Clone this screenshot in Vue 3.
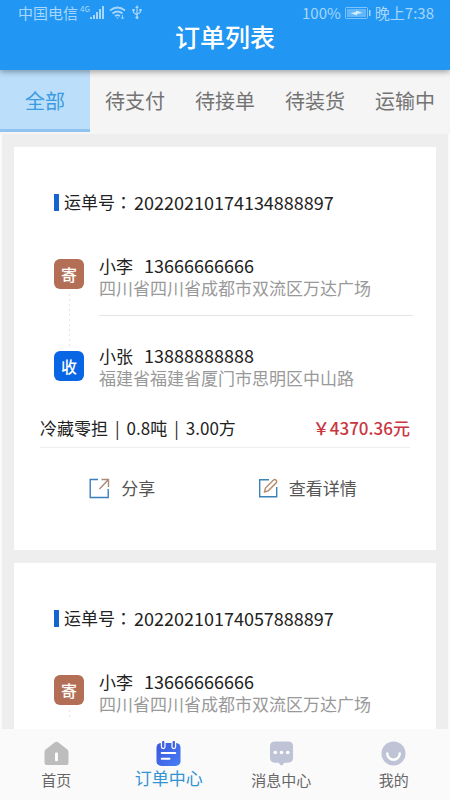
<script setup>
import { ref } from 'vue'

const tabs = ['全部', '待支付', '待接单', '待装货', '运输中']
const activeTab = ref('全部')

const sender = { name: '小李', phone: '13666666666', address: '四川省四川省成都市双流区万达广场' }
const receiver = { name: '小张', phone: '13888888888', address: '福建省福建省厦门市思明区中山路' }

const orders = [
  { no: '20220210174134888897', stops: [sender, receiver], goods: ['冷藏零担', '0.8吨', '3.00方'], price: '4370.36' },
  { no: '20220210174057888897', stops: [sender] }
]
</script>

<template>
  <div class="app">
    <header class="header">
      <div class="status">
        <div class="status-side">
          <span>中国电信</span>
          <span class="net">4G</span>
          <svg class="signal" width="15" height="14" viewBox="0 0 15 14" fill="currentColor">
            <rect x="0" y="11" width="2" height="2" /><rect x="3" y="9" width="2" height="4" />
            <rect x="6" y="6" width="2" height="7" /><rect x="9" y="3" width="2" height="10" />
            <rect x="12" y="0" width="2" height="13" />
          </svg>
          <svg class="wifi" width="17" height="14" viewBox="0 0 17 14" fill="none" stroke="currentColor" stroke-width="1.700">
            <path d="M1 4.500Q8.500-1.500 16 4.500M3.500 7.500Q8.500 3.500 13.500 7.500M6 10.200Q8.500 8.200 11 10.200" />
            <path d="M7.200 11.500h2.600l-1.300 1.500z" fill="currentColor" stroke="none" />
            <path d="M13.500 9v4M12 11.500l1.500 1.500 1.500-1.500" stroke-width="1" />
          </svg>
          <svg class="usb" width="10" height="15" viewBox="0 0 10 15" fill="none" stroke="currentColor" stroke-width="1.200">
            <path d="M5 2v10M1.500 5v2.500L5 10M8.500 5v2L5 9.500" />
            <path d="M5 0l1.800 3H3.200zM.3 4h2.400v2H.3zM7.300 4h2.400v2H7.300z" fill="currentColor" stroke="none" />
            <circle cx="5" cy="12.500" r="1.500" fill="currentColor" stroke="none" />
          </svg>
        </div>
        <div class="status-side">
          <span>100%</span>
          <svg class="battery" width="26" height="12" viewBox="0 0 26 12">
            <rect x=".5" y=".5" width="22" height="11" rx="1" fill="none" stroke="currentColor" opacity=".7" />
            <rect x="2" y="2" width="19" height="8" fill="currentColor" opacity=".5" />
            <path d="M6 6l5-1V3.500l5.500 2L17 6l-5 1v1.500l-5.500-2z" fill="#d3ecff" />
            <rect x="24" y="3" width="1.500" height="6" fill="currentColor" />
          </svg>
          <span>晚上7:38</span>
        </div>
      </div>
      <h1 class="title">订单列表</h1>
    </header>

    <nav class="tabs">
      <button
        v-for="tab in tabs"
        :key="tab"
        type="button"
        class="tab"
        :class="{ active: tab === activeTab }"
        @click="activeTab = tab"
      >{{ tab }}</button>
    </nav>

    <main class="list">
      <article v-for="order in orders" :key="order.no" class="card">
        <h2 class="waybill">
          <span class="mark"></span>
          <span>运单号<span class="colon">：</span></span>
          <span class="digits">{{ order.no }}</span>
        </h2>
        <div class="route">
          <div class="rail">
            <span class="badge from">寄</span>
            <span class="dots"></span>
            <span v-if="order.stops.length > 1" class="badge to">收</span>
          </div>
          <div class="stops">
            <div v-for="stop in order.stops" :key="stop.phone" class="stop">
              <div class="contact"><span>{{ stop.name }}</span><span class="digits">{{ stop.phone }}</span></div>
              <div class="address">{{ stop.address }}</div>
            </div>
          </div>
        </div>
        <template v-if="order.price">
          <div class="summary">
            <div class="goods">
              <template v-for="(part, i) in order.goods" :key="part">
                <span v-if="i">|</span>
                <span>{{ part }}</span>
              </template>
            </div>
            <strong class="price">￥{{ order.price }}元</strong>
          </div>
          <div class="actions">
            <button type="button" class="action">
              <svg width="21" height="21" viewBox="0 0 21 21" fill="none" stroke-width="1.400">
                <path d="M9 1.500H1.200v18h18V11" stroke="#3a7fc0" />
                <path d="M10.500 11L19 2M12.500 1.500h7V9" stroke="#a98d7c" />
              </svg>
              <span>分享</span>
            </button>
            <button type="button" class="action">
              <svg width="20" height="20" viewBox="0 0 20 20" fill="none" stroke-width="1.400">
                <path d="M11 1.700H1.700v17h17V9" stroke="#3a82b4" />
                <path d="M6.500 14l1-4 8-8q1.500-1 2.600.2T18 5l-7.800 7.800z" stroke="#b58a68" />
              </svg>
              <span>查看详情</span>
            </button>
          </div>
        </template>
      </article>
    </main>

    <nav class="bottom">
      <a href="#home" class="item">
        <svg width="25" height="25" viewBox="0 0 26 26">
          <path d="M11 1.500q2-1.500 4 0l9 7q1.500 1.200 1.500 3V22q0 3-3 3h-19q-3 0-3-3V11.500q0-1.800 1.500-3z" fill="#bdbdbd" />
          <rect x="11.500" y="12" width="3" height="9" rx="1" fill="#fff" />
        </svg>
        <span>首页</span>
      </a>
      <a href="#orders" class="item current">
        <svg width="25" height="25" viewBox="0 0 26 26">
          <defs>
            <linearGradient id="orderFill" x1="0" y1="0" x2="1" y2="1">
              <stop offset="0" stop-color="#3b55de" /><stop offset="1" stop-color="#477ff3" />
            </linearGradient>
          </defs>
          <rect x=".5" y="2" width="25" height="24" rx="5" fill="url(#orderFill)" />
          <path d="M7.500 0v6M18.500 0v6" stroke="#fafafa" stroke-width="5" stroke-linecap="round" />
          <path d="M7.500 1v5M18.500 1v5" stroke="#3f60e2" stroke-width="2.400" stroke-linecap="round" />
          <path d="M6 12.500h14M6 18.500h8" stroke="#fff" stroke-width="2.200" stroke-linecap="round" />
        </svg>
        <span>订单中心</span>
      </a>
      <a href="#messages" class="item">
        <svg width="25" height="25" viewBox="0 0 26 26">
          <path d="M6 .5h14q5 0 5 5v12q0 5-5 5h-4l-2 2.500q-1 1-2 0L10 22.500H6q-5 0-5-5v-12q0-5 5-5z" fill="#bfc3d6" />
          <g fill="#fff"><circle cx="6.500" cy="12" r="1.900" /><circle cx="13" cy="12" r="1.900" /><circle cx="19.500" cy="12" r="1.900" /></g>
        </svg>
        <span>消息中心</span>
      </a>
      <a href="#me" class="item">
        <svg width="25" height="25" viewBox="0 0 26 26">
          <circle cx="13" cy="13" r="12.500" fill="#bfc3d6" />
          <path d="M6.500 13a6.500 6.500 0 0 0 13 0" fill="none" stroke="#fff" stroke-width="2.600" stroke-linecap="round" />
        </svg>
        <span>我的</span>
      </a>
    </nav>
  </div>
</template>

<style>
body {
  background: #fafafa;
}
</style>

<style scoped>
.app {
  display: flex;
  flex-direction: column;
  height: 100vh;
  font-family: "Noto Sans CJK SC", sans-serif;
  font-size: 17px;
  color: #222;
}
button {
  padding: 0;
  border: 0;
  background: none;
  font: inherit;
  color: inherit;
}
.header {
  position: relative;
  z-index: 1;
  flex: none;
  padding-bottom: 19px;
  background: #2196f3;
  box-shadow: 0 2px 6px rgba(0, 0, 0, 0.35);
}
.status {
  display: flex;
  justify-content: space-between;
  height: 19px;
  padding: 3px 16px 0 18px;
  font-size: 15px;
  line-height: 19px;
  color: #a6d6fb;
}
.status-side {
  display: flex;
  align-items: center;
}
.net {
  align-self: flex-start;
  margin-left: 2px;
  font-size: 8px;
  line-height: 11px;
}
.wifi {
  margin-left: 4px;
}
.usb {
  margin-left: 6px;
}
.battery {
  margin: 0 4px;
}
.title {
  margin: 0;
  font-size: 25px;
  font-weight: 500;
  line-height: 29px;
  text-align: center;
  color: #fff;
}
.tabs {
  display: flex;
  flex: none;
  height: 64px;
  background: #f5f5f5;
}
.tab {
  box-sizing: border-box;
  flex: 1;
  height: 62px;
  padding-top: 2px;
  border-bottom: 3px solid transparent;
  font-size: 20px;
  color: #737373;
}
.tab.active {
  border-color: #90c4ee;
  background: #bbdefb;
  color: #3a9be0;
}
.list {
  display: flex;
  flex: 1;
  flex-direction: column;
  gap: 13px;
  min-height: 0;
  margin: 0 2px;
  padding: 13px 12px 0;
  overflow: hidden;
  background: #eee;
}
.card {
  flex: none;
  padding: 43px 0 50px;
  background: #fff;
}
.waybill {
  display: flex;
  align-items: center;
  margin: 0 0 40px;
  padding-left: 40px;
  font-size: 17px;
  font-weight: 400;
  line-height: 24px;
}
.mark {
  width: 5px;
  height: 17px;
  margin-right: 5px;
  background: #1565d0;
}
.colon {
  font-family: "Noto Sans CJK TC", sans-serif;
}
.digits {
  font-size: 18px;
}
.waybill .digits {
  margin-left: 2px;
}
.route {
  display: flex;
  gap: 15px;
  padding: 0 23px 0 40px;
}
.rail {
  display: flex;
  flex-direction: column;
  align-items: center;
  padding: 5px 0 8px;
}
.badge {
  width: 30px;
  height: 30px;
  border-radius: 6px;
  font-size: 16px;
  font-weight: 500;
  line-height: 31px;
  text-align: center;
  color: #fff;
}
.from {
  background: #b36f55;
}
.to {
  background: #0866e4;
}
.dots {
  flex: 1;
  width: 1px;
  margin: 5px 0;
  background: repeating-linear-gradient(#e4e4e4 0 2px, transparent 2px 5px);
}
.stops {
  flex: 1;
}
.stop {
  line-height: 22px;
}
.stop:first-child {
  padding-bottom: 16px;
  border-bottom: 1px solid #e4e4e4;
}
.stop + .stop {
  margin-top: 28px;
}
.contact {
  display: flex;
  align-items: baseline;
  gap: 11px;
}
.address {
  color: #999;
}
.summary {
  display: flex;
  justify-content: space-between;
  margin: 27px 26px 0;
  padding-bottom: 7px;
  border-bottom: 1px solid #eee;
  line-height: 24px;
}
.goods {
  display: flex;
  gap: 7px;
}
.price {
  font-weight: 500;
  color: #c9363f;
}
.actions {
  display: flex;
  justify-content: space-around;
  margin: 28px 28px 0 24px;
}
.action {
  display: flex;
  align-items: center;
  gap: 11px;
  line-height: 24px;
  color: #555;
}
.bottom {
  display: flex;
  flex: none;
  height: 71px;
  background: #fafafa;
}
.item {
  display: flex;
  flex: 1;
  flex-direction: column;
  align-items: center;
  gap: 2px;
  padding-top: 12px;
  font-size: 15px;
  line-height: 24px;
  text-decoration: none;
  color: #666;
}
.item.current {
  gap: 0;
  font-size: 17px;
  color: #3294d2;
}
</style>
